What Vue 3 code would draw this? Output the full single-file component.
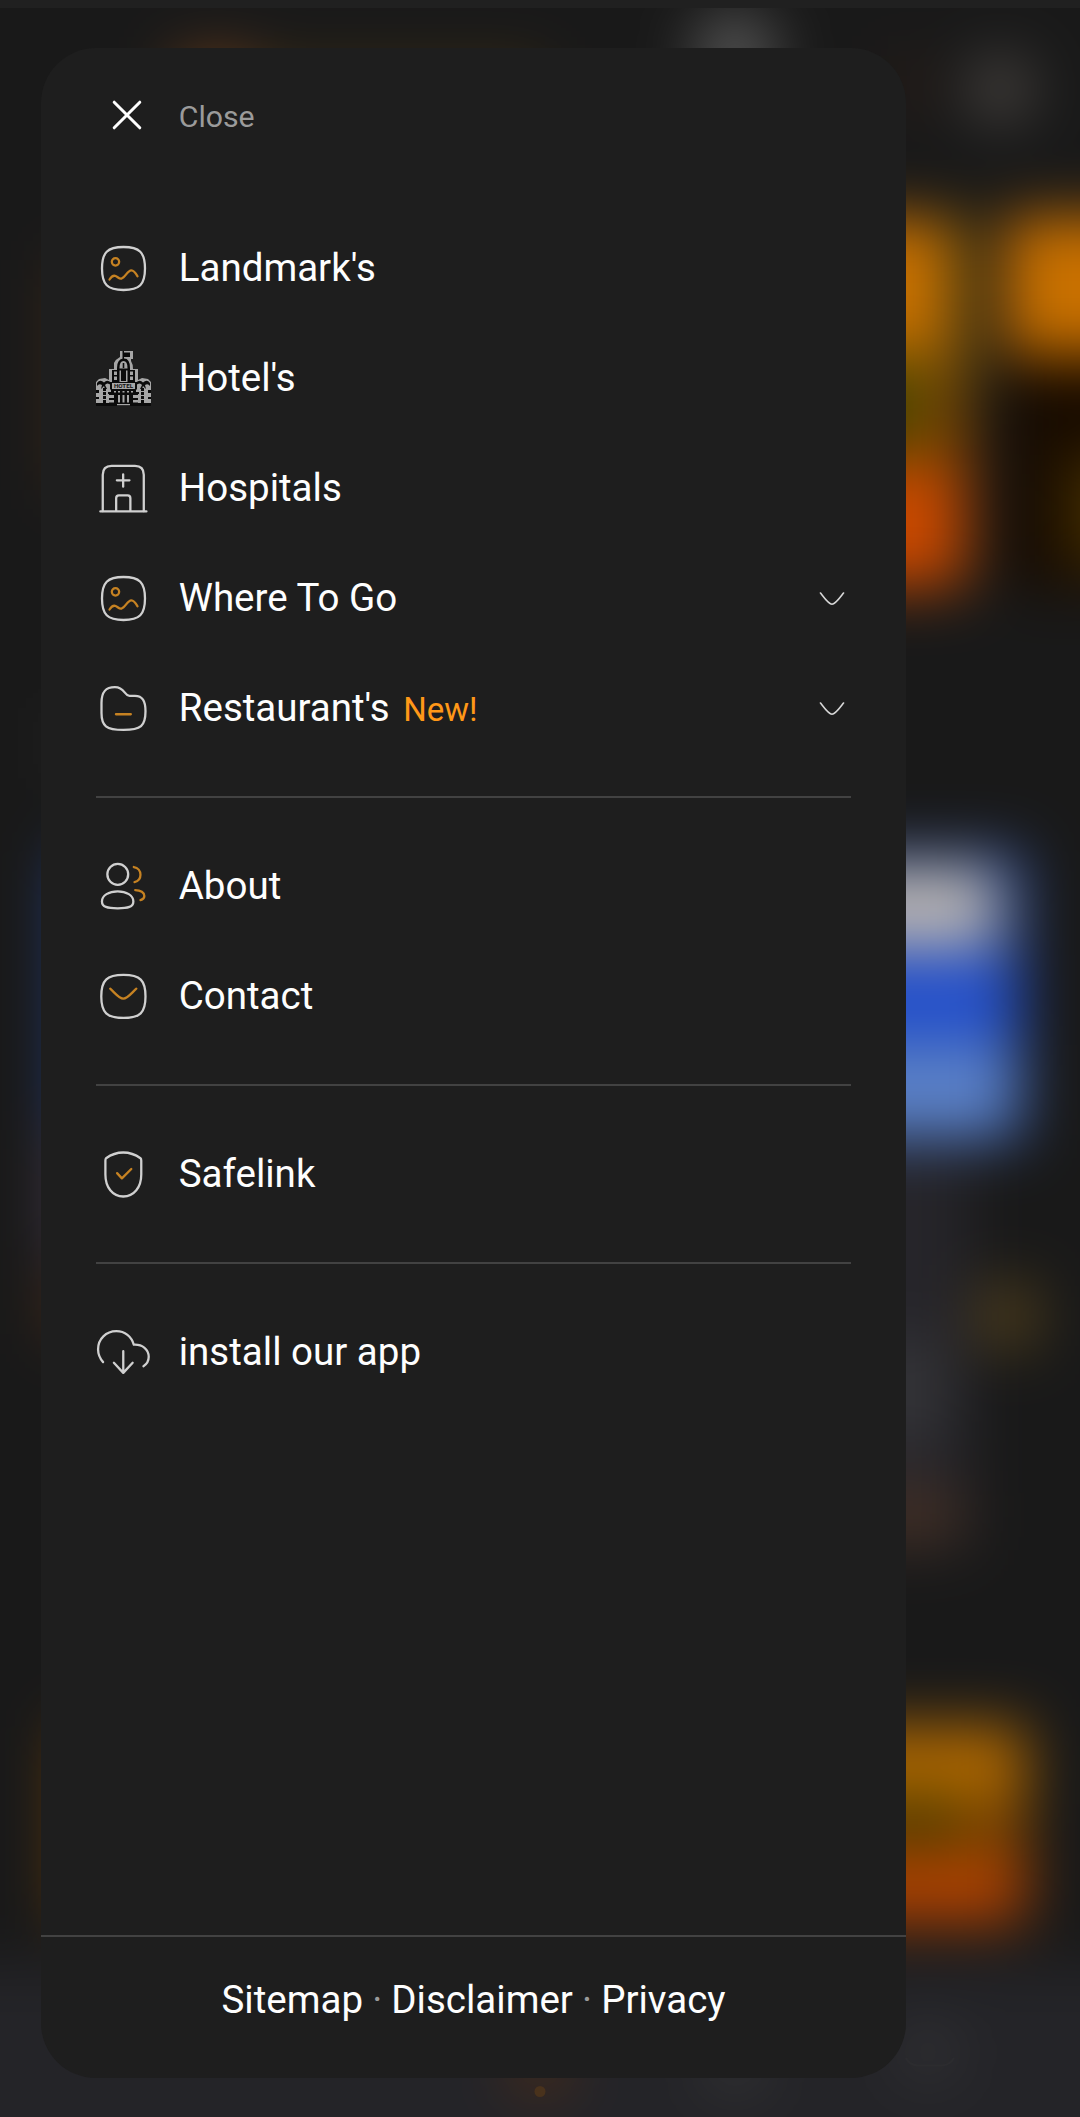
<script setup>
const groups = [
  [
    { label: "Landmark's", icon: 'image' },
    { label: "Hotel's", icon: 'hotel' },
    { label: 'Hospitals', icon: 'hospital' },
    { label: 'Where To Go', icon: 'image', expandable: true },
    { label: "Restaurant's", icon: 'folder', badge: 'New!', expandable: true },
  ],
  [
    { label: 'About', icon: 'people' },
    { label: 'Contact', icon: 'mail' },
  ],
  [{ label: 'Safelink', icon: 'shield' }],
  [{ label: 'install our app', icon: 'cloud' }],
]

const squircle =
  'M2.62 12C2.62 5 5 2.62 12 2.62S21.38 5 21.38 12 19 21.38 12 21.38 2.62 19 2.62 12Z'

const icons = {
  image: {
    base: [squircle],
    accent: [
      'M6.9 9.1a1.6 1.6 0 1 0 3.2 0a1.6 1.6 0 1 0-3.2 0Z',
      'M5.9 16.8C6.6 15.7 7.4 15 8.3 15.2C9.3 15.4 10 16.6 11.1 16.4C12.8 16 13.7 12.8 15.4 12.8C16.6 12.8 17.4 14.1 18.1 15.4',
    ],
  },
  hospital: {
    base: [
      'M2.95 21.9V6Q2.95 2.1 6.8 2.1H17Q20.85 2.1 20.85 6V21.9',
      'M1.9 22H22',
      'M11.85 5.8V11.2M9.1 8.45H14.6',
      'M8.8 21.8V16.2Q8.8 15 10 15H13.8Q15 15 15 16.2V21.8',
    ],
  },
  folder: {
    base: [
      'M2.4 9.5C2.4 4.5 4.3 2.65 8.2 2.65C12.6 2.6 12.2 6.4 14.6 6.5H16.8C20.3 6.4 21.6 8.8 21.6 13.2C21.6 19.6 19.6 21.35 12 21.35C4.4 21.35 2.4 19.6 2.4 14Z',
    ],
    accent: ['M8.7 14.5H15.2'],
  },
  people: {
    base: [
      'M4.95 6.7a4.55 4.55 0 1 0 9.1 0a4.55 4.55 0 1 0-9.1 0Z',
      'M9.45 14.1C13.3 14.1 16.3 15.9 16.3 18.5C16.3 20.9 14 21.5 9.45 21.5C4.9 21.5 2.6 20.9 2.6 18.5C2.6 15.9 5.6 14.1 9.45 14.1Z',
    ],
    accent: [
      'M16.5 3.5C18.3 3.8 19.4 5.2 19.4 6.85C19.4 8.5 18.4 9.7 16.8 10.05',
      'M17.1 13.55C19.5 13.6 21.1 14.7 21.1 16.1C21.1 16.9 20.5 17.6 19.4 17.9',
    ],
  },
  mail: {
    base: [
      'M2.3 12C2.3 4.9 4.7 2.6 12 2.6S21.6 4.9 21.6 12 19.2 21.35 12 21.35 2.3 19.1 2.3 12Z',
    ],
    accent: ['M6.2 8.6C8.1 10.2 9.9 12.9 11.9 12.9S15.7 10.2 17.6 8.6'],
  },
  shield: {
    base: [
      'M11.9 2.4C14.9 2.4 17.6 3.6 19.4 4.9Q19.75 5.2 19.75 6V12C19.75 17.6 16.6 21.6 11.9 21.6S4.1 17.6 4.1 12V6Q4.1 5.2 4.4 4.9C6.2 3.6 8.9 2.4 11.9 2.4Z',
    ],
    accent: ['M9.2 11.4L11.3 13.7L15.4 9.6'],
  },
  cloud: {
    base: [
      'M3.1 16.2C1.6 14.5 .9 12.7 .9 10.6C.9 6.1 4.4 2.7 8.9 2.7C12.6 2.7 15.5 5 16.5 8.6C20.3 8.4 23 10.6 23 13.9C23 15.8 22.2 17.1 20.7 18',
      'M11.9 11.4V20.8M7.8 16.5L11.9 20.9L16 16.5',
    ],
  },
}
</script>

<template>
  <div class="screen">
    <svg class="backdrop" viewBox="0 0 1080 2117" aria-hidden="true">
      <defs>
        <filter id="soft" x="-150" y="-150" width="1380" height="2417" filterUnits="userSpaceOnUse" color-interpolation-filters="sRGB">
          <feGaussianBlur stdDeviation="29" />
        </filter>
      </defs>
      <g filter="url(#soft)">
        <rect x="-150" y="-150" width="1380" height="2417" fill="#191919" />
        <rect x="175" y="56" width="80" height="70" fill="#6a3c1a" />
        <rect x="255" y="64" width="290" height="60" fill="#3a2c14" />
        <circle cx="735" cy="54" r="42" fill="#565656" />
        <rect x="890" y="55" width="35" height="60" fill="#2a1d17" />
        <circle cx="1000" cy="89" r="34" fill="#45413e" />

        <rect x="60" y="260" width="60" height="230" fill="#402814" />
        <rect x="860" y="218" width="108" height="370" rx="12" fill="#804600" />
        <rect x="830" y="218" width="116" height="136" fill="#c87000" />
        <rect x="945" y="218" width="25" height="180" fill="#755609" />
        <rect x="830" y="354" width="88" height="98" fill="#444600" />
        <rect x="830" y="466" width="132" height="121" fill="#c84800" />
        <rect x="1008" y="214" width="180" height="376" rx="12" fill="#180b00" />
        <rect x="1004" y="216" width="220" height="140" fill="#c87000" />
        <rect x="1070" y="455" width="100" height="110" fill="#463000" />

        <rect x="55" y="725" width="80" height="36" fill="#292929" />
        <rect x="61" y="850" width="964" height="292" rx="10" fill="#22428c" />
        <rect x="830" y="868" width="166" height="80" fill="#bab5b2" />
        <rect x="830" y="955" width="182" height="85" fill="#2450cc" />
        <rect x="830" y="1045" width="182" height="90" fill="#5c82c8" />
        <rect x="52" y="1130" width="70" height="130" fill="#403748" />
        <rect x="52" y="1275" width="70" height="60" fill="#4d2d18" />
        <rect x="830" y="1150" width="140" height="400" fill="#26252a" />
        <rect x="978" y="1285" width="60" height="62" fill="#4e3d1a" />
        <rect x="850" y="1340" width="95" height="100" fill="#343438" />
        <rect x="860" y="1490" width="100" height="50" fill="#463024" />

        <rect x="64" y="1726" width="962" height="196" rx="10" fill="#7a4200" />
        <rect x="830" y="1726" width="194" height="78" fill="#b06800" />
        <rect x="830" y="1794" width="138" height="56" fill="#503c00" />
        <rect x="830" y="1855" width="192" height="68" fill="#b24200" />
        <rect x="-150" y="1965" width="1380" height="340" fill="#242428" />
        <circle cx="735" cy="2064" r="28" fill="#363637" />
        <circle cx="540" cy="2066" r="28" fill="#502c16" />
        <circle cx="928" cy="2052" r="26" fill="#353538" />
      </g>
      <circle cx="540" cy="2091.500" r="5.500" fill="#49321c" />
      <path d="M906 2058Q909 2065 918 2065.500H942Q950 2065 954 2058" fill="none" stroke="#2c2c2f" stroke-width="2" />
      <rect width="1080" height="8" fill="#202020" />
    </svg>

    <nav class="drawer">
      <header class="close">
        <svg class="cross" viewBox="0 0 32 32">
          <path d="M3.2 3.2L28.8 28.8M28.8 3.2L3.2 28.8" />
        </svg>
        <span>Close</span>
      </header>

      <div class="menu">
        <ul v-for="(group, g) in groups" :key="g" class="group">
          <li v-for="item in group" :key="item.label" class="item">
            <svg v-if="item.icon === 'hotel'" class="icon" viewBox="0 0 55 55">
              <path
                fill="#a6a6a6"
                d="M24 0H37V8H35V10Q37 13 37 18H42V29L46 27L52 28L55 31V52H0V31L3 28L9 27L13 29V18H18V12Q20 8 24 6Z"
              />
              <g fill="#0b0b0b">
                <path d="M26.500 0H28V1.500H34V6H28V8H26.500Z" />
                <path d="M21 31V17Q21 8 27.500 7.500T34 17V31H31.500V17Q31.500 10 27.500 10T23.500 17V31Z" />
                <path d="M16 19H21V20.500H18V24H21V25.500H18V29H21V31H16ZM39 19H34V20.500H37V24H34V25.500H37V29H34V31H39Z" />
                <path d="M23 17.500H32V19.500H30V30H25V19.500H23Z" />
                <path d="M26.700 12H28.300V17H26.700Z" />
                <path d="M14 31H41V38.500H40V41H43V43H42V52H55V55H0V52H13V43H12V41H15V38.500H14Z" />
                <path d="M1 32Q4 28 8 31.500Q11 28 15 31.500V34Q11 31 9 34L11 38H9L8 35L5 38L6 34Q3 32 1 35Z" />
                <path d="M54 32Q51 28 47 31.500Q44 28 40 31.500V34Q44 31 46 34L44 38H46L47 35L50 38L49 34Q52 32 54 35Z" />
                <path d="M7 37h3v3h-3zM7 41h3v3h-3zM7 45h3v3h-3zM7 49h3v3h-3zM45 37h3v3h-3zM45 41h3v3h-3zM45 45h3v3h-3zM45 49h3v3h-3z" />
                <path d="M0 39H3V42H0ZM0 46H3V48H0ZM52 39H55V42H52ZM52 46H55V48H52Z" />
              </g>
              <g fill="#a6a6a6">
                <path d="M16 32H39V38H16Z" />
                <path d="M13 44H18V47H13ZM37 44H42V47H37ZM13 49H18V51.500H13ZM37 49H42V51.500H37Z" />
                <path d="M22 44H24V51.500H22ZM26.500 44H28.500V51.500H26.500ZM31 44H33V51.500H31ZM21 53H34V54.200H21Z" />
                <path d="M18 40h2v1.500h-2zM22 40h2v1.500h-2zM26.500 40h2v1.500h-2zM31 40h2v1.500h-2zM35 40h2v1.500h-2z" />
              </g>
              <text x="27.500" y="37.300" text-anchor="middle" class="sign">HOTEL</text>
            </svg>
            <svg v-else class="icon" viewBox="0 0 24 24">
              <path v-for="d in icons[item.icon].base" :key="d" :d="d" class="line" />
              <path v-for="d in icons[item.icon].accent" :key="d" :d="d" class="line accent" />
            </svg>
            <span class="label">{{ item.label }}</span>
            <span v-if="item.badge" class="badge">{{ item.badge }}</span>
            <svg v-if="item.expandable" class="chevron" viewBox="0 0 26 14">
              <path d="M1.500 1C5 5.500 9.500 12.200 13 12.200S21 5.500 24.500 1" />
            </svg>
          </li>
        </ul>
      </div>

      <footer class="links">
        <a>Sitemap</a><i>·</i><a>Disclaimer</a><i>·</i><a>Privacy</a>
      </footer>
    </nav>
  </div>
</template>

<style>
body {
  background: #191919;
}
</style>

<style scoped>
.screen {
  position: relative;
  box-sizing: border-box;
  width: 1080px;
  height: 2117px;
  padding: 48px 0 0 41px;
  overflow: hidden;
  font-family: Roboto, sans-serif;
  color: #fefefe;
}

.backdrop {
  position: absolute;
  inset: 0;
  width: 1080px;
  height: 2117px;
}

.drawer {
  position: relative;
  display: flex;
  flex-direction: column;
  width: 865px;
  height: 2030px;
  border-radius: 55px;
  background: #1e1e1e;
  overflow: hidden;
}

.close {
  display: flex;
  align-items: center;
  height: 136px;
  padding-left: 69.500px;
  font-size: 30.250px;
  color: #9b9b9b;
}

.close span {
  margin-left: 36.200px;
}

.cross {
  width: 32px;
  height: 32px;
  margin-top: -3px;
  fill: none;
  stroke: #fefefe;
  stroke-width: 3;
  stroke-linecap: round;
}

.menu {
  flex: 1;
  padding: 29px 55px 0;
}

.group {
  margin: 0;
  padding: 0;
  list-style: none;
}

.group + .group {
  margin-top: 33px;
  padding-top: 33px;
  border-top: 2px solid #424242;
}

.item {
  display: flex;
  align-items: center;
  height: 110px;
  font-size: 38.500px;
}

.icon {
  flex: none;
  width: 55px;
  height: 55px;
  margin-right: 27.750px;
}

.line {
  fill: none;
  stroke: #d0d0d0;
  stroke-width: 1;
  stroke-linecap: round;
  stroke-linejoin: round;
}

.accent {
  stroke: #c68222;
}

.sign {
  font: bold 6.200px Roboto, sans-serif;
  fill: #101010;
}

.label,
.badge {
  line-height: 50px;
  white-space: nowrap;
}

.badge {
  margin: 3px 0 0 13.500px;
  font-size: 33px;
  color: #ff9818;
}

.chevron {
  width: 26px;
  height: 14px;
  margin: 2px 6px 0 auto;
  fill: none;
  stroke: #d8d8d8;
  stroke-width: 1.600;
  stroke-linecap: round;
}

.links {
  display: flex;
  box-sizing: border-box;
  justify-content: center;
  height: 143px;
  padding-top: 38px;
  border-top: 2px solid #424242;
  font-size: 38.500px;
  line-height: 50px;
}

.links i {
  width: 28.300px;
  font-style: normal;
  text-align: center;
  color: #9b9b9b;
}
</style>
